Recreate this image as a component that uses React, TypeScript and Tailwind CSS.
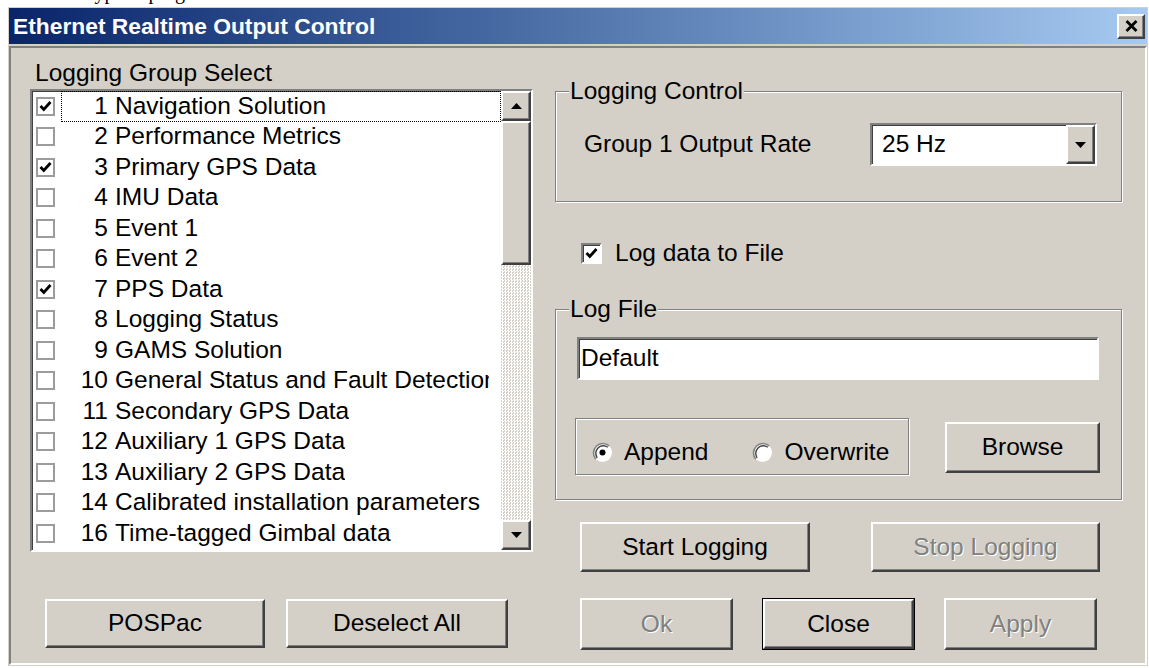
import React from "react";

const RAISED =
  "border-2 border-t-white border-l-white border-r-[#404040] border-b-[#404040] shadow-[inset_-1px_-1px_0_#808080]";
const SUNKEN =
  "border-2 border-t-[#808080] border-l-[#808080] border-r-white border-b-white shadow-[inset_1px_1px_0_#404040]";
const ETCHED =
  "border border-[#808080] shadow-[inset_1px_1px_0_#fff,1px_1px_0_#fff]";
const DISABLED = "text-[#808080] [text-shadow:1px_1px_0_#fff]";

type Row = { on: boolean; n: string; label: string };

const rows: Row[] = [
  { on: true, n: "1", label: "Navigation Solution" },
  { on: false, n: "2", label: "Performance Metrics" },
  { on: true, n: "3", label: "Primary GPS Data" },
  { on: false, n: "4", label: "IMU Data" },
  { on: false, n: "5", label: "Event 1" },
  { on: false, n: "6", label: "Event 2" },
  { on: true, n: "7", label: "PPS Data" },
  { on: false, n: "8", label: "Logging Status" },
  { on: false, n: "9", label: "GAMS Solution" },
  { on: false, n: "10", label: "General Status and Fault Detection" },
  { on: false, n: "11", label: "Secondary GPS Data" },
  { on: false, n: "12", label: "Auxiliary 1 GPS Data" },
  { on: false, n: "13", label: "Auxiliary 2 GPS Data" },
  { on: false, n: "14", label: "Calibrated installation parameters" },
  { on: false, n: "16", label: "Time-tagged Gimbal data" },
];

function Tick() {
  return (
    <svg width="13" height="12" viewBox="0 0 13 12">
      <path d="M1.5 6 L4.8 9.5 L11.5 2" fill="none" stroke="#000" strokeWidth="2.8" />
    </svg>
  );
}

function TriDown() {
  return (
    <svg width="11" height="6" viewBox="0 0 11 6">
      <path d="M0 0 H11 L5.5 6 Z" fill="#000" />
    </svg>
  );
}

function TriUp() {
  return (
    <svg width="11" height="6" viewBox="0 0 11 6">
      <path d="M0 6 H11 L5.5 0 Z" fill="#000" />
    </svg>
  );
}

function Radio({ on }: { on: boolean }) {
  return (
    <svg width="21" height="21" viewBox="0 0 21 21">
      <circle cx="10.5" cy="10.5" r="9.5" fill="#fff" />
      <path d="M3.8 17.2 A9.5 9.5 0 0 1 17.2 3.8" fill="none" stroke="#808080" strokeWidth="1.6" />
      <path d="M5.2 15.8 A7.6 7.6 0 0 1 15.8 5.2" fill="none" stroke="#404040" strokeWidth="1.4" />
      {on && <circle cx="10.5" cy="10.5" r="3" fill="#000" />}
    </svg>
  );
}

function TitleBar() {
  return (
    <div className="h-[36px] shrink-0 bg-linear-to-r from-[#0a246a] to-[#a6caf0] flex items-center pl-[4px] pr-[2px]">
      <span className="text-white font-bold text-[22.8px] leading-none">
        Ethernet Realtime Output Control
      </span>
      <div className={`ml-auto w-[28px] h-[25px] bg-[#d4d0c8] ${RAISED} flex items-center justify-center`}>
        <svg width="13" height="12" viewBox="0 0 13 12">
          <path d="M1.5 1 L11.5 11 M11.5 1 L1.5 11" stroke="#000" strokeWidth="2.8" />
        </svg>
      </div>
    </div>
  );
}

function ListRow({ row, focus }: { row: Row; focus: boolean }) {
  return (
    <div className="flex items-center h-[30.5px] shrink-0">
      <div className="ml-[4px] w-[19px] h-[19px] shrink-0 border-2 border-[#9c9c9c] bg-white flex items-center justify-center">
        {row.on && <Tick />}
      </div>
      <div
        className={`ml-[6px] flex-1 h-full flex items-center whitespace-nowrap border border-dotted ${
          focus ? "border-black" : "border-transparent"
        }`}
      >
        <span className="w-[46px] shrink-0 text-right">{row.n}</span>
        <span className="ml-[7px] max-w-[374px] overflow-hidden">{row.label}</span>
      </div>
    </div>
  );
}

function Button({
  label,
  className,
  disabled,
}: {
  label: string;
  className: string;
  disabled?: boolean;
}) {
  return (
    <div
      className={`${className} ${RAISED} bg-[#d4d0c8] flex items-center justify-center shrink-0 ${
        disabled ? DISABLED : "text-black"
      }`}
    >
      {label}
    </div>
  );
}

function LeftColumn() {
  return (
    <div className="w-[503px] flex flex-col">
      <div className="mt-[14px] h-[22px] leading-[22px] pl-[5px]">Logging Group Select</div>
      <div className={`mt-[5px] h-[463px] ${SUNKEN} bg-white flex`}>
        <div className="flex-1 overflow-hidden flex flex-col">
          {rows.map((r, i) => (
            <ListRow key={r.n} row={r} focus={i === 0} />
          ))}
        </div>
        <div className="w-[30px] flex flex-col">
          <div className={`h-[30px] ${RAISED} bg-[#d4d0c8] flex items-center justify-center`}>
            <TriUp />
          </div>
          <div className={`h-[144px] ${RAISED} bg-[#d4d0c8]`} />
          <div className="flex-1 bg-[repeating-conic-gradient(#ffffff_0%_25%,#d4d0c8_0%_50%)] bg-[length:3px_3px]" />
          <div className={`h-[30px] ${RAISED} bg-[#d4d0c8] flex items-center justify-center`}>
            <TriDown />
          </div>
        </div>
      </div>
      <div className="mt-[47px] flex pl-[15px] gap-[21px]">
        <Button label="POSPac" className="w-[220px] h-[49px]" />
        <Button label="Deselect All" className="w-[222px] h-[49px]" />
      </div>
    </div>
  );
}

function RightColumn() {
  return (
    <div className="ml-[22px] w-[567px] flex flex-col">
      {/* Logging Control group */}
      <div className={`mt-[43px] h-[111px] relative ${ETCHED} pt-[31px]`}>
        <span className="absolute -top-[12px] left-[13px] px-[1px] bg-[#d4d0c8] leading-[22px]">
          Logging Control
        </span>
        <div className="flex items-center pl-[28px] pr-[24px]">
          <span>Group 1 Output Rate</span>
          <div className={`ml-auto w-[227px] h-[43px] ${SUNKEN} bg-white flex`}>
            <div className="flex-1 pl-[10px] flex items-center">25 Hz</div>
            <div className={`w-[29px] ${RAISED} bg-[#d4d0c8] flex items-center justify-center`}>
              <TriDown />
            </div>
          </div>
        </div>
      </div>

      {/* Log data to file */}
      <div className="mt-[40px] h-[22px] flex items-center pl-[26px]">
        <div className={`w-[21px] h-[21px] ${SUNKEN} bg-white flex items-center justify-center`}>
          <Tick />
        </div>
        <span className="ml-[13px]">Log data to File</span>
      </div>

      {/* Log File group */}
      <div className={`mt-[45px] h-[191px] relative ${ETCHED} pt-[27px]`}>
        <span className="absolute -top-[12px] left-[13px] px-[1px] bg-[#d4d0c8] leading-[22px]">
          Log File
        </span>
        <div className={`ml-[21px] w-[522px] h-[43px] ${SUNKEN} bg-white flex items-center pl-[2px]`}>
          Default
        </div>
        <div className="mt-[38px] flex items-start">
          <div className={`ml-[19px] w-[334px] h-[57px] ${ETCHED} flex items-center pt-[12px] pl-[16px]`}>
            <Radio on />
            <span className="ml-[11px]">Append</span>
            <span className="ml-[44px] flex items-center">
              <Radio on={false} />
            </span>
            <span className="ml-[11px]">Overwrite</span>
          </div>
          <Button label="Browse" className="ml-[36px] mt-[4px] w-[155px] h-[51px]" />
        </div>
      </div>

      {/* Logging actions */}
      <div className="mt-[22px] flex pl-[25px]">
        <Button label="Start Logging" className="w-[230px] h-[50px]" />
        <Button label="Stop Logging" className="ml-[61px] w-[229px] h-[50px]" disabled />
      </div>

      {/* Dialog actions */}
      <div className="mt-[26px] flex pl-[25px]">
        <Button label="Ok" className="w-[153px] h-[52px]" disabled />
        <div className="ml-[29px] w-[153px] h-[52px] border border-black flex">
          <Button label="Close" className="w-[151px] h-[50px]" />
        </div>
        <Button label="Apply" className="ml-[29px] w-[153px] h-[52px]" disabled />
      </div>
    </div>
  );
}

export default function App() {
  return (
    <div className="w-[1149px] h-[668px] overflow-hidden bg-white font-['Liberation_Sans',Arial,sans-serif] text-[24.5px] text-black">
      <div className="h-[7px] overflow-hidden pl-[89px]">
        <div className="-mt-[18px] font-['Liberation_Serif','Times_New_Roman',serif] text-[20px] leading-[20px] whitespace-nowrap">
          typical program
        </div>
      </div>
      <div className="ml-[8px] w-[1140px] h-[659px] bg-[#d4d0c8] p-[1px] flex flex-col">
        <TitleBar />
        <div className="mt-[2px] flex-1 border-2 border-t-[#808080] border-l-[#808080] border-r-white border-b-white flex pl-[19px]">
          <LeftColumn />
          <RightColumn />
        </div>
      </div>
    </div>
  );
}
